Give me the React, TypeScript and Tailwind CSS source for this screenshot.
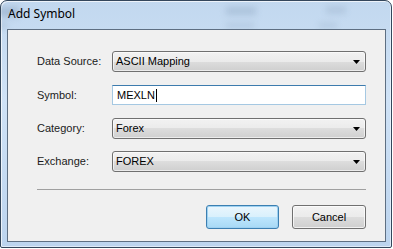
type ComboProps = { value: string }
function Combo({ value }: ComboProps) {
	return (
		<div className="relative flex h-[21px] w-[254px] items-center rounded-[3px] border border-[#707070] bg-[linear-gradient(to_bottom,#f2f2f2_0%,#ebebeb_50%,#dddddd_50%,#cfcfcf_100%)] pl-[3px] shadow-[inset_0_0_0_1px_rgba(255,255,255,0.6)]">
			<span className="text-[11px] text-black">{value}</span>
			<svg
				aria-hidden="true"
				className="absolute right-[5px] top-[8px]"
				width="7"
				height="4"
				viewBox="0 0 7 4"
			>
				<path d="M0 0h7L3.5 4z" fill="#000" />
			</svg>
		</div>
	)
}

function Row({ label, children, className }: { label: string; children: React.ReactNode; className?: string }) {
	return (
		<div className={`flex items-center ${className ?? ''}`}>
			<span className="w-[75px] text-[11px] text-[#1b1b1b]">{label}</span>
			{children}
		</div>
	)
}

export default function App() {
	return (
		<div className="relative h-[249px] w-[393px] overflow-hidden bg-white font-['Liberation_Sans',sans-serif]">
			<div className="relative flex h-[248px] w-[392px] flex-col overflow-hidden rounded-t-[7px] rounded-b-[2px] border border-[#34475c] bg-[linear-gradient(to_bottom,#c2d8ef,#cfe2f6_40%,#bcd4ee)] pl-[6px] pr-[5px] pb-[5px] shadow-[inset_1px_1px_0_rgba(255,255,255,0.7),inset_-1px_-1px_0_rgba(255,255,255,0.5)]">
				{/* blurred content behind the glass */}
				<div className="pointer-events-none absolute inset-0 blur-[3px]">
					<span className="absolute left-[-4px] top-[6px] h-[10px] w-[22px] bg-[#8aa2bd]/50" />
					<span className="absolute left-[225px] top-[6px] h-[8px] w-[30px] bg-[#8aa2bd]/40" />
					<span className="absolute left-[325px] top-[5px] h-[8px] w-[20px] bg-[#8aa2bd]/30" />
					<span className="absolute left-[225px] top-[22px] h-[5px] w-[28px] bg-[#8aa2bd]/30" />
					<span className="absolute left-[318px] top-[22px] h-[5px] w-[18px] bg-[#8aa2bd]/30" />
					<span className="absolute left-[-2px] top-[22px] h-[5px] w-[8px] bg-[#8aa2bd]/40" />
				</div>
				<div className="relative flex h-[28px] items-center pl-[1px] pb-[2px]">
					<span className="font-['Noto_Sans',sans-serif] text-[12px] text-black">Add Symbol</span>
				</div>
				<div className="relative flex flex-1 flex-col border border-[#5e6f82] bg-[#f0f0f0] pl-[29px] pr-[19px]">
					<Row label="Data Source:" className="mt-[21px]">
						<Combo value="ASCII Mapping" />
					</Row>
					<Row label="Symbol:" className="mt-[13px]">
						<div className="flex h-[20px] w-[254px] items-center border border-[#a5c8e2] border-t-[#3d7bad] bg-white pl-[4px]">
							<span className="text-[11px] text-black">MEXLN</span>
							<span className="ml-[1px] h-[13px] w-px bg-black" />
						</div>
					</Row>
					<Row label="Category:" className="mt-[13px]">
						<Combo value="Forex" />
					</Row>
					<Row label="Exchange:" className="mt-[12px]">
						<Combo value="FOREX" />
					</Row>
					<div className="mt-[17px] h-[2px] border-t border-[#a0a0a0] border-b-white" />
					<div className="mt-[14px] flex justify-end gap-[13px]">
						<button
							type="button"
							className="h-[24px] w-[73px] rounded-[3px] border border-[#3c7fb1] bg-[linear-gradient(to_bottom,#eaf6fd_0%,#d9f0fc_50%,#bee6fd_50%,#a7d9f5_100%)] text-[11px] text-black shadow-[inset_0_0_0_1px_#9ed1f1]"
						>
							OK
						</button>
						<button
							type="button"
							className="h-[24px] w-[74px] rounded-[3px] border border-[#707070] bg-[linear-gradient(to_bottom,#f2f2f2_0%,#ebebeb_50%,#dddddd_50%,#cfcfcf_100%)] text-[11px] text-black shadow-[inset_0_0_0_1px_rgba(255,255,255,0.7)]"
						>
							Cancel
						</button>
					</div>
				</div>
			</div>
		</div>
	)
}
